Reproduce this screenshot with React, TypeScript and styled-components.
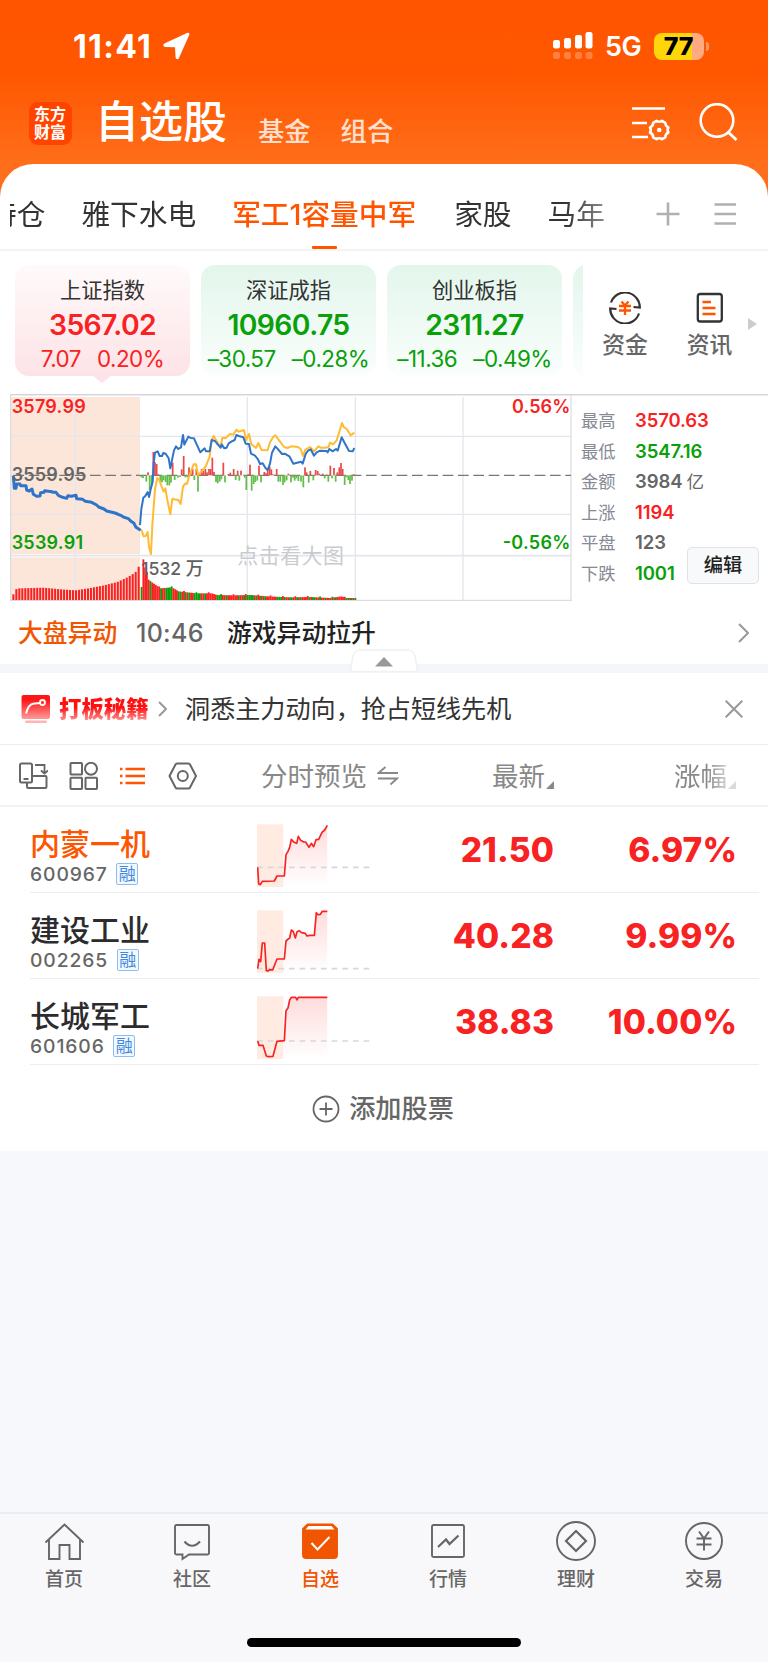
import React from "react";
import styled, { createGlobalStyle, css } from "styled-components";

const RED = "#f82222";
const GREEN = "#0aa00a";
const ORANGE = "#ff5500";
const GREY = "#666";

const GlobalStyle = createGlobalStyle`
  * { box-sizing: border-box; }
  html, body { margin: 0; padding: 0; }
  body {
    width: 768px;
    background: #f7f8fb;
    font-family: Inter, "Noto Sans CJK SC", sans-serif;
    color: #333;
    overflow: hidden;
  }
  svg { display: block; flex: none; }
`;

const Screen = styled.div`
  width: 768px;
  height: 1662px;
  display: flex;
  flex-direction: column;
  background: #f7f8fb;
  white-space: nowrap;
`;

/* ---------- header ---------- */

const Header = styled.header`
  height: 204px;
  flex: none;
  margin-bottom: -40px;
  background: linear-gradient(#ff5500 0, #ff5600 70px, #ff6e1a 163px, #ff6e1a 204px);
  color: #fff;
`;

const StatusBar = styled.div`
  height: 92px;
  display: flex;
  align-items: center;
  padding: 0 59px 0 73px;
`;

const Clock = styled.div`
  font-size: 32px;
  font-weight: 700;
  line-height: 40px;
  letter-spacing: 1.3px;
  margin-top: 1px;
  width: 90px;
`;

const Network = styled.div`
  font-size: 27px;
  font-weight: 600;
  line-height: 40px;
  letter-spacing: -0.4px;
  margin: 2px 0 0 12px;
  width: 49px;
`;

const Spacer = styled.div`
  flex: 1;
`;

const Battery = styled.div`
  width: 50px;
  height: 27px;
  border-radius: 8px;
  background: linear-gradient(90deg, #ffd60a 0 77%, #ffaa80 77%);
  color: #000;
  font-size: 25px;
  font-weight: 800;
  line-height: 27px;
  letter-spacing: -0.2px;
  text-align: center;
  padding-right: 1px;
`;

const BatteryTip = styled.div`
  width: 3px;
  height: 9px;
  margin-left: 2px;
  border-radius: 0 3px 3px 0;
  background: #ff9a66;
`;

const TitleBar = styled.div`
  height: 62px;
  display: flex;
  align-items: center;
  padding: 0 30px 0 29px;
`;

const Logo = styled.div`
  width: 43px;
  height: 43px;
  border-radius: 9px;
  background: #ff4400;
  font-family: "Noto Sans CJK SC", sans-serif;
  font-size: 16px;
  font-weight: 700;
  line-height: 18px;
  padding: 2px 0 0 5px;
`;

const Title = styled.h1`
  margin: 0 0 0 23px;
  font-size: 44px;
  line-height: 60px;
  height: 63px;
  font-weight: 500;
`;

const SubTitle = styled.span<{ $gap: number }>`
  margin: 17px 0 0 ${(p) => p.$gap}px;
  font-size: 26.3px;
  line-height: 40px;
  font-weight: 500;
  color: #ffe0cf;
`;

/* ---------- watch-list group tabs ---------- */

const Panel = styled.main`
  position: relative;
  height: 987px;
  flex: none;
  background: #fff;
  border-radius: 33px 33px 0 0;
`;

const GroupTabs = styled.nav`
  height: 87px;
  display: flex;
  align-items: center;
  border-bottom: 2px solid #f4f4f5;
  padding-left: 10px;
`;

const TabStrip = styled.div`
  display: flex;
  width: 620px;
  height: 87px;
  overflow: hidden;
  align-items: center;
  -webkit-mask-image: linear-gradient(90deg, #000 555px, rgba(0, 0, 0, 0.35) 615px);
  mask-image: linear-gradient(90deg, #000 555px, rgba(0, 0, 0, 0.35) 615px);
`;

const GroupTab = styled.div<{ $active?: boolean; $gap: number }>`
  position: relative;
  height: 87px;
  line-height: 104px;
  margin-left: ${(p) => p.$gap}px;
  font-size: 28.7px;
  color: #333;
  flex: none;
  ${(p) =>
    p.$active &&
    css`
      color: ${ORANGE};
      font-weight: 500;
      &::after {
        content: "";
        position: absolute;
        left: 50%;
        bottom: 1px;
        width: 25px;
        height: 3px;
        margin-left: -12px;
        border-radius: 1px;
        background: ${ORANGE};
      }
    `}
`;

/* ---------- index cards ---------- */

const IndexRow = styled.section`
  height: 143px;
  display: flex;
  padding: 14px 0 0 15px;
`;

const CardStrip = styled.div`
  display: flex;
  width: 568px;
  height: 122px;
  gap: 11px;
  overflow: hidden;
`;

const Card = styled.div<{ $up?: boolean }>`
  position: relative;
  flex: none;
  width: 175px;
  height: 111px;
  border-radius: 14px;
  text-align: center;
  color: ${(p) => (p.$up ? RED : GREEN)};
  background: ${(p) => (p.$up ? "linear-gradient(#fffafa, #fde3e7)" : "linear-gradient(#e3f6ec, #fafefc)")};
  ${(p) =>
    p.$up &&
    css`
      &::after {
        content: "";
        position: absolute;
        left: 78px;
        top: 111px;
        border: 9px solid transparent;
        border-top: 7px solid #fde3e7;
        border-bottom: 0;
      }
    `}
`;

const CardName = styled.div`
  padding-top: 9px;
  font-size: 21.3px;
  line-height: 32px;
  color: #333;
`;

const CardValue = styled.div`
  font-size: 28.3px;
  font-weight: 600;
  line-height: 38px;
  letter-spacing: -0.6px;
`;

const CardChange = styled.div`
  display: flex;
  justify-content: center;
  gap: 16px;
  font-size: 22.4px;
  line-height: 30px;
  letter-spacing: -0.5px;
`;

const Shortcut = styled.div<{ $gap: number }>`
  width: 46px;
  margin-left: ${(p) => p.$gap}px;
  padding-top: 27px;
  display: flex;
  flex-direction: column;
  align-items: center;
  font-size: 22.8px;
  font-weight: 500;
  line-height: 32px;
  color: #666;
  svg { margin-bottom: 5px; }
`;

/* ---------- market chart ---------- */

const MarketRow = styled.section`
  height: 207px;
  display: flex;
  padding-left: 10px;
  background: linear-gradient(90deg, transparent 10px, #d5d7de 10px) top / 100% 1.5px no-repeat;
`;

const StatList = styled.div`
  position: relative;
  flex: 1;
  padding: 11px 0 0 9px;
`;

const Stat = styled.div`
  display: flex;
  height: 30.5px;
  line-height: 31px;
`;

const StatLabel = styled.span`
  width: 54px;
  font-size: 17.3px;
  color: #858a94;
`;

const StatValue = styled.span<{ $color: string }>`
  font-size: 18.5px;
  font-weight: 600;
  letter-spacing: -0.1px;
  color: ${(p) => p.$color};
`;

const StatUnit = styled.span`
  margin-left: 4px;
  font-size: 17.5px;
  font-weight: 400;
`;

const EditButton = styled.button`
  position: absolute;
  right: 9px;
  top: 153px;
  width: 72px;
  height: 37px;
  padding: 0;
  border: 1.5px solid #e0e2e9;
  border-radius: 5px;
  background: #f8f9fb;
  font: 500 19.3px/33px Inter, "Noto Sans CJK SC", sans-serif;
  color: #222;
`;

/* ---------- news + banner ---------- */

const NewsRow = styled.div`
  position: relative;
  height: 72px;
  border-bottom: 9px solid #f4f6f9;
  display: flex;
  align-items: center;
  padding: 0 19px 0 18px;
  font-weight: 500;
  line-height: 40px;
`;

const NewsTag = styled.span`
  font-size: 24.8px;
  color: #f25500;
  width: 118px;
`;

const NewsTime = styled.span`
  font-size: 25px;
  letter-spacing: 0.3px;
  color: #666;
  width: 91px;
`;

const NewsText = styled.span`
  font-size: 24.8px;
  color: #222;
  flex: 1;
`;

const Collapse = styled.div`
  position: absolute;
  left: 350px;
  top: 48px;
`;

const Banner = styled.div`
  height: 71.5px;
  border-bottom: 1.5px solid #ececee;
  display: flex;
  align-items: center;
  padding: 2px 25px 0 21px;
`;

const BannerTag = styled.span`
  margin: 0 9px 0 9px;
  font-size: 22.4px;
  font-weight: 900;
  line-height: 30px;
  background: linear-gradient(#ff1010 45%, #ff9c9c 92%);
  -webkit-background-clip: text;
  background-clip: text;
  color: transparent;
`;

const BannerText = styled.span`
  flex: 1;
  margin-left: 18.5px;
  font-size: 25.1px;
  line-height: 40px;
  color: #333;
`;

/* ---------- stock table ---------- */

const TableHead = styled.div`
  height: 62px;
  border-bottom: 2px solid #f3f3f4;
  display: flex;
  align-items: center;
  padding: 2px 0 0 19px;
  font-size: 26.5px;
  line-height: 40px;
  color: #888;
`;

const ViewIcons = styled.div`
  display: flex;
  width: 242px;
  gap: 20.6px;
`;

const HeadCell = styled.div<{ $width: number; $fade?: boolean }>`
  width: ${(p) => p.$width}px;
  display: flex;
  align-items: center;
  ${(p) =>
    p.$fade &&
    css`
      -webkit-mask-image: linear-gradient(90deg, #000 32px, rgba(0, 0, 0, 0.3) 56px);
      mask-image: linear-gradient(90deg, #000 32px, rgba(0, 0, 0, 0.3) 56px);
    `}
`;

const StockRow = styled.div`
  height: 86px;
  margin: 0 9px 0 30px;
  border-bottom: 1.5px solid #eeeef0;
  display: flex;
`;

const StockInfo = styled.div`
  width: 227px;
  padding-top: 15px;
`;

const StockName = styled.div<{ $active?: boolean }>`
  font-size: 30px;
  font-weight: 500;
  line-height: 44px;
  height: 41px;
  color: ${(p) => (p.$active ? ORANGE : "#2c2c2e")};
`;

const StockCode = styled.div`
  display: flex;
  align-items: center;
  height: 22px;
  font-size: 19.3px;
  font-weight: 500;
  letter-spacing: 0.9px;
  line-height: 22px;
  color: #666;
`;

const MarginTag = styled.span`
  width: 22px;
  height: 22px;
  margin-left: 8.5px;
  border: 1.5px solid #8fbcf0;
  border-radius: 2px;
  background: #f3f9ff;
  color: #3f8ae0;
  font: 400 17px/18px "Noto Sans CJK SC", sans-serif;
  letter-spacing: 0;
  text-align: center;
`;

const SparkCell = styled.div`
  width: 113px;
  padding-top: 17px;
`;

const Figure = styled.div<{ $width: number }>`
  width: ${(p) => p.$width}px;
  text-align: right;
  padding-top: 22px;
  font-size: 33.5px;
  line-height: 42px;
  font-weight: 800;
  letter-spacing: 0.1px;
  color: ${RED};
`;

const AddStock = styled.div`
  height: 88px;
  display: flex;
  align-items: center;
  justify-content: center;
  gap: 9px;
  padding-right: 2px;
  font-size: 26.2px;
  font-weight: 500;
  color: #666;
  line-height: 40px;
`;

/* ---------- bottom navigation ---------- */

const BottomArea = styled.footer`
  margin-top: auto;
  height: 150px;
  flex: none;
  border-top: 2px solid #ececef;
  background: #f8f8fb;
`;

const NavBar = styled.nav`
  display: grid;
  grid-template-columns: repeat(6, 1fr);
  height: 124px;
`;

const NavItem = styled.div<{ $active?: boolean }>`
  display: flex;
  flex-direction: column;
  align-items: center;
  padding-top: 7px;
  font-size: 19px;
  font-weight: 500;
  line-height: 30px;
  color: ${(p) => (p.$active ? "#f05500" : GREY)};
  svg { margin-bottom: 3px; }
`;

const HomeIndicator = styled.div`
  width: 274px;
  height: 9px;
  margin: 0 auto;
  border-radius: 5px;
  background: #000;
`;

/* ---------- data ---------- */

type IndexQuote = { name: string; value: string; diff: string; pct: string; up?: boolean };
const indices: IndexQuote[] = [
  { name: "上证指数", value: "3567.02", diff: "7.07", pct: "0.20%", up: true },
  { name: "深证成指", value: "10960.75", diff: "–30.57", pct: "–0.28%" },
  { name: "创业板指", value: "2311.27", diff: "–11.36", pct: "–0.49%" },
];

const stats: { label: string; value: string; color: string; unit?: string }[] = [
  { label: "最高", value: "3570.63", color: RED },
  { label: "最低", value: "3547.16", color: GREEN },
  { label: "金额", value: "3984", color: GREY, unit: "亿" },
  { label: "上涨", value: "1194", color: RED },
  { label: "平盘", value: "123", color: GREY },
  { label: "下跌", value: "1001", color: GREEN },
];

type Stock = { name: string; code: string; price: string; pct: string; base: number; line: string; active?: boolean };
const stocks: Stock[] = [
  {
    name: "内蒙一机", code: "600967", price: "21.50", pct: "6.97%", base: 130, active: true,
    line: "2,130 5,180 10,182 16,172 52,171 60,156 82,156 87,92 93,82 98,70 103,46 110,54 119,58 124,37 131,49 140,54 146,54 156,70 163,58 170,68 177,47 185,46 195,25 203,18 211,4",
  },
  {
    name: "建设工业", code: "002265", price: "40.28", pct: "9.99%", base: 176,
    line: "2,176 6,148 11,155 16,99 23,99 28,182 33,183 38,179 47,180 60,147 82,147 87,93 95,86 98,84 103,60 109,65 115,84 120,66 126,62 134,68 145,70 150,78 158,76 172,76 178,8 183,14 190,13 196,4 211,4",
  },
  {
    name: "长城军工", code: "601606", price: "38.83", pct: "10.00%", base: 135,
    line: "2,135 6,148 18,148 28,180 34,182 48,181 60,136 82,134 87,44 93,36 98,12 103,4 116,4 120,12 124,4 211,4",
  },
];

/* ---------- charts ---------- */

const Spark = ({ id, base, line }: { id: number; base: number; line: string }) => (
  <svg width="114" height="64" viewBox="0 0 342 192">
    <defs>
      <linearGradient id={`fill${id}`} x1="0" y1="0" x2="0" y2="1">
        <stop offset="0" stopColor="#f82222" stopOpacity=".16" />
        <stop offset="1" stopColor="#f82222" stopOpacity="0" />
      </linearGradient>
      <clipPath id={`right${id}`}>
        <rect x="80" y="0" width="132" height="192" />
      </clipPath>
    </defs>
    <rect x="0" y="1" width="79" height="188" fill="#ffebe2" />
    <polygon points={`${line} 211,189 2,189`} fill={`url(#fill${id})`} clipPath={`url(#right${id})`} />
    <line x1="0" x2="340" y1={base} y2={base} stroke="#d5d7dd" strokeWidth="5" strokeDasharray="17 15" />
    <polyline points={line} fill="none" stroke={RED} strokeWidth="5" strokeLinejoin="round" />
  </svg>
);

const interpolate = (points: number[][], x: number) => {
  for (let i = 1; i < points.length; i++) {
    const [x0, y0] = points[i - 1];
    const [x1, y1] = points[i];
    if (x <= x1) return y0 + ((y1 - y0) * (x - x0)) / (x1 - x0);
  }
  return points[points.length - 1][1];
};

const auctionVolume = [[38, 628], [45, 613], [55, 610], [130, 608], [180, 613], [225, 616], [270, 609], [310, 601], [350, 591], [380, 577], [398, 566], [408, 558], [415, 543]];
const tradeVolume = [[423, 606], [427, 606], [428, 516], [433, 543], [438, 556], [444, 583], [455, 592], [470, 602], [480, 610], [515, 607], [535, 619], [560, 622], [590, 625], [635, 625], [650, 630], [700, 631], [750, 630], [800, 634], [870, 637], [930, 636], [990, 639], [1025, 634], [1035, 639], [1068, 639]];
const greenBars = new Set([0, 5, 11, 14, 15, 16, 17, 21, 22, 25, 27, 30, 31, 32, 33, 36, 43, 44, 45, 48, 55, 58, 60, 61, 62, 63, 65, 68, 70, 77, 78, 79, 81, 84, 85, 88, 90, 95, 97, 98, 101, 104, 108, 110, 116, 117, 119, 121]);
const flow: [number, number][] = [
  [424, 277], [429, 279], [439, 290], [444, 262], [449, 315], [455, 304], [460, 201], [465, 232], [470, 237], [475, 268], [481, 290], [486, 292], [491, 286], [497, 291], [502, 301], [508, 301], [513, 293], [518, 233], [524, 285], [534, 278], [540, 276], [545, 253], [551, 213], [556, 277], [562, 277], [567, 247], [572, 259], [578, 252], [583, 285], [589, 252], [594, 320], [599, 268], [605, 252], [610, 258], [616, 252], [621, 262], [627, 252], [632, 252], [637, 218], [642, 261], [648, 291], [653, 295], [659, 290], [664, 283], [670, 233], [675, 292], [685, 267], [691, 263], [701, 252], [707, 285], [713, 257], [718, 287], [723, 257], [734, 278], [739, 315], [745, 268], [750, 239], [755, 317], [761, 297], [766, 291], [772, 287], [777, 242], [783, 292], [793, 261], [798, 265], [803, 249], [809, 245], [814, 253], [819, 268], [830, 252], [835, 290], [841, 290], [849, 300], [854, 292], [860, 286], [865, 266], [873, 292], [879, 278], [884, 287], [889, 280], [895, 288], [903, 290], [910, 307], [915, 247], [920, 262], [926, 293], [931, 258], [940, 286], [947, 255], [953, 258], [958, 266], [968, 266], [974, 280], [980, 269], [985, 290], [991, 242], [996, 280], [1002, 249], [1007, 290], [1012, 262], [1018, 247], [1023, 234], [1028, 252], [1034, 300], [1040, 277], [1045, 285], [1050, 297], [1056, 287], [1061, 268],
];

const preLine = "40,272 43,310 48,310 50,297 60,297 62,302 78,302 80,315 88,318 96,312 100,328 110,334 120,333 122,323 132,322 134,317 156,320 158,322 168,322 175,331 185,336 200,340 204,332 214,334 228,331 230,341 248,343 256,349 275,352 290,360 296,366 312,372 320,378 345,384 362,391 370,396 385,401 392,408 402,415 408,427 422,436";
const priceLine = "420,420 424,372 430,338 436,333 443,321 447,336 453,308 458,290 461,235 465,203 473,199 479,213 486,213 490,204 497,206 506,220 511,250 517,220 522,196 528,184 535,192 543,187 549,150 553,179 565,155 572,159 582,160 590,178 601,202 614,190 618,199 629,199 635,165 645,168 653,178 662,188 665,178 673,190 680,188 686,175 694,170 704,165 709,150 716,153 730,157 737,176 747,177 753,206 765,212 774,223 780,237 788,235 797,250 803,255 810,236 816,203 826,184 835,194 846,207 854,206 868,214 880,236 903,230 908,236 917,207 924,197 932,193 942,212 950,202 960,197 980,198 983,202 988,192 998,199 1008,192 1013,197 1025,157 1036,178 1047,198 1058,199 1063,189";
const averageLine = "424,434 431,454 437,453 443,441 447,486 453,507 457,420 465,313 472,279 477,283 485,305 491,320 496,310 502,345 511,388 517,342 535,345 542,357 549,305 556,295 561,297 567,275 581,238 588,238 594,270 603,262 612,251 618,243 629,214 635,165 641,153 650,168 662,188 667,158 676,160 690,147 700,149 709,134 716,140 732,135 738,165 747,147 754,178 768,189 775,174 785,195 803,196 810,172 819,157 826,151 838,167 852,186 862,189 874,184 894,186 902,192 909,213 916,194 930,186 942,199 955,184 962,188 975,188 985,187 990,173 999,178 1010,166 1016,147 1026,114 1031,126 1040,132 1052,151 1063,143";

const MarketChart = () => (
  <svg width="562" height="207" viewBox="30 27 1686 621" fontFamily='Inter, "Noto Sans CJK SC", sans-serif'>
    <rect x="33" y="36" width="387" height="472" fill="#fce6da" />
    <rect x="33" y="517" width="387" height="130" fill="#fce6da" />
    <g stroke="#e4e6ee" strokeWidth="4">
      <path d="M33 154H1712M33 388H1712M226 36V647M742 36V647M1066 36V647M1389 36V647" />
      <path d="M31 512H1712" strokeWidth="5" />
    </g>
    <path d="M32 27V648M1713 27V648M30 646H1713" stroke="#d3d5dd" strokeWidth="3" />
    <path d="M30 28H1716" stroke="#d3d5dd" strokeWidth="4" />
    <path d="M40 271H1713" stroke="#777" strokeWidth="3.5" strokeDasharray="32 14" />
    <text x="712" y="535" fontSize="63" fill="#c9cbd0" textLength="320">点击看大图</text>
    {Array.from({ length: 43 }, (_, i) => {
      const x = 38 + i * 8.95;
      const y = interpolate(auctionVolume, x);
      return <rect key={i} x={x - 1} y={y} width="6.2" height={645 - y} fill={RED} />;
    })}
    {Array.from({ length: 122 }, (_, i) => {
      const x = 422 + i * 5.3;
      const y = interpolate(tradeVolume, x + 2) - (i % 7 === 3 ? 3 : 0);
      return <rect key={i} x={x} y={y} width="5.6" height={645 - y} fill={greenBars.has(i) ? GREEN : RED} />;
    })}
    {flow.map(([x, y]) => (
      <rect key={x} x={x - 2.6} y={Math.min(y, 271)} width="5.2" height={Math.abs(y - 271)} fill={y < 271 ? "#e84a4a" : "#62bd4a"} />
    ))}
    <g fill="none" strokeLinejoin="round" strokeWidth="6">
      <polyline points={averageLine} stroke="#ffbb33" />
      <polyline points={preLine} stroke="#2f74c8" strokeWidth="9" />
      <polyline points={priceLine} stroke="#2f74c8" />
    </g>
    <g fontSize="54" fontWeight="600">
      <text x="35" y="84" fill={RED} textLength="222">3579.99</text>
      <text x="35" y="288" fill="#666" textLength="224">3559.95</text>
      <text x="35" y="492" fill={GREEN} textLength="214">3539.91</text>
      <text x="1536" y="84" fill={RED} textLength="175">0.56%</text>
      <text x="1508" y="492" fill={GREEN} textLength="203">-0.56%</text>
      <text x="424" y="570" fill="#606060" fontSize="53" fontWeight="500" textLength="186">1532 万</text>
    </g>
  </svg>
);

/* ---------- icons ---------- */

const navItems: { label: string; icon: React.ReactNode; active?: boolean }[] = [
  { label: "首页", icon: <path d="M1.500 21.500 20.500 3.500 39.500 21.500M5 19V38H15.500V24H25.500V38H36V19" /> },
  { label: "社区", icon: <><path d="M4.500 4H35.500Q37 4 37 5.500V32Q37 33.500 35.500 33.500H17L10.500 38V33.500H4.500Q3 33.500 3 32V5.500Q3 4 4.500 4Z" /><path d="M12.500 20.500Q20 29 28 20.500" strokeWidth="2.200" /></> },
  { label: "自选", active: true, icon: <><path d="M3 8 7.500 3.500H32.500L37 8V34Q37 37 34 37H6Q3 37 3 34Z" fill="#f05500" stroke="#f05500" /><path d="M5.500 8.500 8.500 5H31.500L34.500 8.500Z" fill="#fff" stroke="none" /><path d="M11.500 22 17.500 28.500 29.500 16" stroke="#fff" strokeWidth="2" /></> },
  { label: "行情", icon: <><rect x="4" y="4" width="32" height="32" rx="1.500" /><path d="M10 26 18 18.500 21.500 23 30.500 14.500" strokeWidth="2.200" /></> },
  { label: "理财", icon: <><circle cx="20" cy="20" r="19" /><path d="M20 10 30 20 20 30 10 20Z" strokeWidth="2.200" /></> },
  { label: "交易", icon: <><circle cx="20" cy="20" r="18" /><path d="M15 10.500 20 17.500 25 10.500M20 17.500V29.500M12.500 17.500H27.500M12.500 23.500H27.500" /></> },
];

const Chevron = ({ width, height }: { width: number; height: number }) => (
  <svg width={width + 2} height={height + 2} viewBox={`-1 -1 ${width + 2} ${height + 2}`} fill="none" stroke="#999" strokeWidth="2">
    <path d={`M0 0 ${width} ${height / 2} 0 ${height}`} />
  </svg>
);

const SortMark = () => (
  <svg width="8" height="8">
    <path d="M8 0V8H0Z" fill="#888" />
  </svg>
);

const SortSlot = styled.span`
  margin: 18px 0 0 1px;
`;

const SwapSlot = styled.span`
  margin-left: 10px;
`;

const ArrowSlot = styled.div`
  margin: 53px 0 0 15px;
`;

const IconGap = styled.div<{ $left: number; $top?: number }>`
  margin: ${(p) => p.$top ?? 0}px 0 0 ${(p) => p.$left}px;
`;

export default function App() {
  return (
    <Screen>
      <GlobalStyle />
      <Header>
        <StatusBar>
          <Clock>11:41</Clock>
          <svg width="28" height="28" viewBox="0 0 28 28" fill="#fff">
            <path d="M24.500.8 1.400 11.600C-.2 12.500.2 14.800 2 14.900L12 15.300 12.600 25.600C12.700 27.500 15.200 27.800 15.900 26.200L26.300 2.800C26.800 1.300 25.700.3 24.500.8Z" />
          </svg>
          <Spacer />
          <svg width="40" height="28" viewBox="0 0 40 28" fill="#fff">
            <rect x="0" y="8" width="7" height="8.500" rx="2.200" />
            <rect x="11" y="6" width="7" height="10.500" rx="2.200" />
            <rect x="22" y="3" width="7" height="13.500" rx="2.200" />
            <rect x="32.500" y="0" width="7" height="16.500" rx="2.200" />
            <g opacity=".25">
              <rect x="0" y="20" width="7" height="7" rx="2.200" />
              <rect x="11" y="20" width="7" height="7" rx="2.200" />
              <rect x="22" y="20" width="7" height="7" rx="2.200" />
              <rect x="32.500" y="20" width="7" height="7" rx="2.200" />
            </g>
          </svg>
          <Network>5G</Network>
          <Battery>77</Battery>
          <BatteryTip />
        </StatusBar>
        <TitleBar>
          <Logo>东方<br />财富</Logo>
          <Title>自选股</Title>
          <SubTitle $gap={31}>基金</SubTitle>
          <SubTitle $gap={30}>组合</SubTitle>
          <Spacer />
          <svg width="40" height="40" viewBox="0 0 40 40" fill="none" stroke="#fff" strokeWidth="2.600">
            <path d="M1 5.500H34M1 20H16M1 34H17" />
            <path d="M25.500 17.800Q28.200 19.600 31 17.800L34.300 19.800Q34.300 23 37.400 24.500Q35.800 27 37.400 29.500Q34.300 31 34.300 34.300L31 36.200Q28.200 34.400 25.500 36.200L22.200 34.300Q22.200 31 19 29.500Q20.600 27 19 24.500Q22.200 23 22.200 19.800Z" strokeLinejoin="round" />
            <circle cx="28.200" cy="27" r="2.300" fill="#fff" stroke="none" />
          </svg>
          <IconGap $left={27}>
            <svg width="40" height="40" viewBox="0 0 40 40" fill="none" stroke="#fff" strokeWidth="2.600">
              <circle cx="19" cy="17.500" r="16.300" />
              <path d="M30 29 38.500 37" strokeWidth="3" />
            </svg>
          </IconGap>
        </TitleBar>
      </Header>

      <Panel>
        <GroupTabs>
          <TabStrip>
            <GroupTab $gap={-22}>持仓</GroupTab>
            <GroupTab $gap={36}>雅下水电</GroupTab>
            <GroupTab $gap={36} $active>军工1容量中军</GroupTab>
            <GroupTab $gap={38}>家股</GroupTab>
            <GroupTab $gap={36}>马年</GroupTab>
          </TabStrip>
          <IconGap $left={26} $top={14}>
            <svg width="24" height="24" fill="none" stroke="#b0b0b0" strokeWidth="2.600">
              <path d="M.5 12H23.500M12 .5V23.500" />
            </svg>
          </IconGap>
          <IconGap $left={34} $top={14}>
            <svg width="24" height="24" fill="none" stroke="#b0b0b0" strokeWidth="2.600">
              <path d="M.5 2.500H22M.5 12H22M.5 21.500H22" />
            </svg>
          </IconGap>
        </GroupTabs>

        <IndexRow>
          <CardStrip>
            {indices.map((q) => (
              <Card key={q.name} $up={q.up}>
                <CardName>{q.name}</CardName>
                <CardValue>{q.value}</CardValue>
                <CardChange>
                  <span>{q.diff}</span>
                  <span>{q.pct}</span>
                </CardChange>
              </Card>
            ))}
            <Card />
          </CardStrip>
          <Shortcut $gap={19}>
            <svg width="34" height="32" viewBox="0 0 34 32" fill="none" stroke="#333" strokeWidth="2.200">
              <path d="M3 10.500A14.800 14.800 0 0 1 31.800 15.500L25.500 15" />
              <path d="M31 21.500A14.800 14.800 0 0 1 2.200 16.500L8.500 17" />
              <path d="M13.500 9.500 17 13.500 20.500 9.500M17 13.500V23M11 14H23M11 18.500H23" stroke={ORANGE} strokeWidth="2.300" />
            </svg>
            资金
          </Shortcut>
          <Shortcut $gap={38.5}>
            <svg width="28" height="32" viewBox="0 0 28 32" fill="none" stroke="#333" strokeWidth="2.300">
              <rect x="1.800" y="2" width="24" height="27.500" rx="2.500" />
              <path d="M6.500 10H15M6.500 16H19.500M6.500 22H19.500" stroke={ORANGE} strokeWidth="2.500" />
            </svg>
            资讯
          </Shortcut>
          <ArrowSlot>
            <svg width="9" height="12"><path d="M0 0 9 6 0 12Z" fill="#ccc" /></svg>
          </ArrowSlot>
        </IndexRow>

        <MarketRow>
          <MarketChart />
          <StatList>
            {stats.map((s) => (
              <Stat key={s.label}>
                <StatLabel>{s.label}</StatLabel>
                <StatValue $color={s.color}>
                  {s.value}
                  {s.unit && <StatUnit>{s.unit}</StatUnit>}
                </StatValue>
              </Stat>
            ))}
            <EditButton>编辑</EditButton>
          </StatList>
        </MarketRow>

        <NewsRow>
          <NewsTag>大盘异动</NewsTag>
          <NewsTime>10:46</NewsTime>
          <NewsText>游戏异动拉升</NewsText>
          <Chevron width={9} height={18} />
          <Collapse>
            <svg width="68" height="23" viewBox="0 0 68 23">
              <path d="M.5 22.500 3 7Q4.500 1 11 1H57Q63.500 1 65 7L67.500 22.500Z" fill="#fff" stroke="#f0f1f3" strokeWidth="1.500" />
              <path d="M25 17.500 34 8 43 17.500Z" fill="#999" />
            </svg>
          </Collapse>
        </NewsRow>

        <Banner>
          <svg width="29" height="29" viewBox="0 0 29 29">
            <defs>
              <linearGradient id="badge" x1="0" y1="0" x2="0" y2="1">
                <stop offset=".2" stopColor="#ff1515" />
                <stop offset="1" stopColor="#ff9a9a" />
              </linearGradient>
            </defs>
            <rect x=".5" y="0" width="28.500" height="24" rx="2" fill="url(#badge)" />
            <path d="M5 18.500Q7.500 9.500 12 8.800L19 8" stroke="#fff" strokeWidth="2" fill="none" />
            <circle cx="21.500" cy="7.500" r="2.500" stroke="#fff" strokeWidth="1.800" fill="none" />
            <rect x="4" y="25.500" width="22" height="2.500" rx="1.200" fill="#ffb5b5" />
          </svg>
          <BannerTag>打板秘籍</BannerTag>
          <Chevron width={7} height={14} />
          <BannerText>洞悉主力动向，抢占短线先机</BannerText>
          <svg width="18" height="18" stroke="#999" strokeWidth="2"><path d="M.7.7 17.300 17.300M17.300.7.7 17.300" /></svg>
        </Banner>

        <TableHead>
          <ViewIcons>
            <svg width="29" height="28" viewBox="0 0 29 28" fill="none" stroke="#666" strokeWidth="2">
              <rect x="1" y="1.500" width="12" height="19" rx="1.500" />
              <path d="M4.500 17H9.500M16 3H25.500V11M22 8.500 25.500 11.500 29 8.500" strokeWidth="1.800" />
              <path d="M13 14H26.500Q27.500 14 27.500 15V24.500Q27.500 26 26.500 26H9.500Q8 26 8 24.500V20.500" />
            </svg>
            <svg width="29" height="28" viewBox="0 0 29 28" fill="none" stroke="#666" strokeWidth="2">
              <rect x="1.500" y="1" width="11.500" height="11.500" rx=".8" />
              <circle cx="22" cy="6.800" r="6" />
              <rect x="1.500" y="15.800" width="11.500" height="11.200" rx=".8" />
              <rect x="16.500" y="15.800" width="11.500" height="11.200" rx=".8" />
            </svg>
            <svg width="29" height="28" viewBox="0 0 29 28" stroke={ORANGE} strokeWidth="2.500">
              <path d="M2 7H4.500M7.500 7H27M2 14H4.500M7.500 14H27M2 21H4.500M7.500 21H27" />
            </svg>
            <svg width="29" height="28" viewBox="0 0 29 28" fill="none" stroke="#666" strokeWidth="2">
              <path d="M9 1.500H20.500Q21.500 1.500 22 2.500L28 14 22 25.500Q21.500 26.500 20.500 26.500H9Q8 26.500 7.500 25.500L1.500 14 7.500 2.500Q8 1.500 9 1.500Z" strokeLinejoin="round" />
              <circle cx="14.800" cy="14" r="5" />
            </svg>
          </ViewIcons>
          <HeadCell $width={231}>
            分时预览
            <SwapSlot>
              <svg width="22" height="20" viewBox="0 0 22 20" fill="none" stroke="#888" strokeWidth="1.800">
                <path d="M21 7H1.500L8.500 1M1 12.500H20L13.500 18.500" />
              </svg>
            </SwapSlot>
          </HeadCell>
          <HeadCell $width={182}>
            最新<SortSlot><SortMark /></SortSlot>
          </HeadCell>
          <HeadCell $width={64} $fade>
            涨幅<SortSlot><SortMark /></SortSlot>
          </HeadCell>
        </TableHead>

        {stocks.map((s, i) => (
          <StockRow key={s.code}>
            <StockInfo>
              <StockName $active={s.active}>{s.name}</StockName>
              <StockCode>
                {s.code}
                <MarginTag>融</MarginTag>
              </StockCode>
            </StockInfo>
            <SparkCell>
              <Spark id={i} base={s.base} line={s.line} />
            </SparkCell>
            <Figure $width={184}>{s.price}</Figure>
            <Figure $width={183}>{s.pct}</Figure>
          </StockRow>
        ))}

        <AddStock>
          <svg width="28" height="28" viewBox="0 0 28 28" fill="none" stroke="#666" strokeWidth="1.800">
            <circle cx="14" cy="14" r="12.500" />
            <path d="M7.500 14H20.500M14 7.500V20.500" />
          </svg>
          添加股票
        </AddStock>
      </Panel>

      <BottomArea>
        <NavBar>
          {navItems.map((n) => (
            <NavItem key={n.label} $active={n.active}>
              <svg width="41" height="41" viewBox="0 0 41 41" fill="none" stroke="#666" strokeWidth="1.900">
                {n.icon}
              </svg>
              {n.label}
            </NavItem>
          ))}
        </NavBar>
        <HomeIndicator />
      </BottomArea>
    </Screen>
  );
}
